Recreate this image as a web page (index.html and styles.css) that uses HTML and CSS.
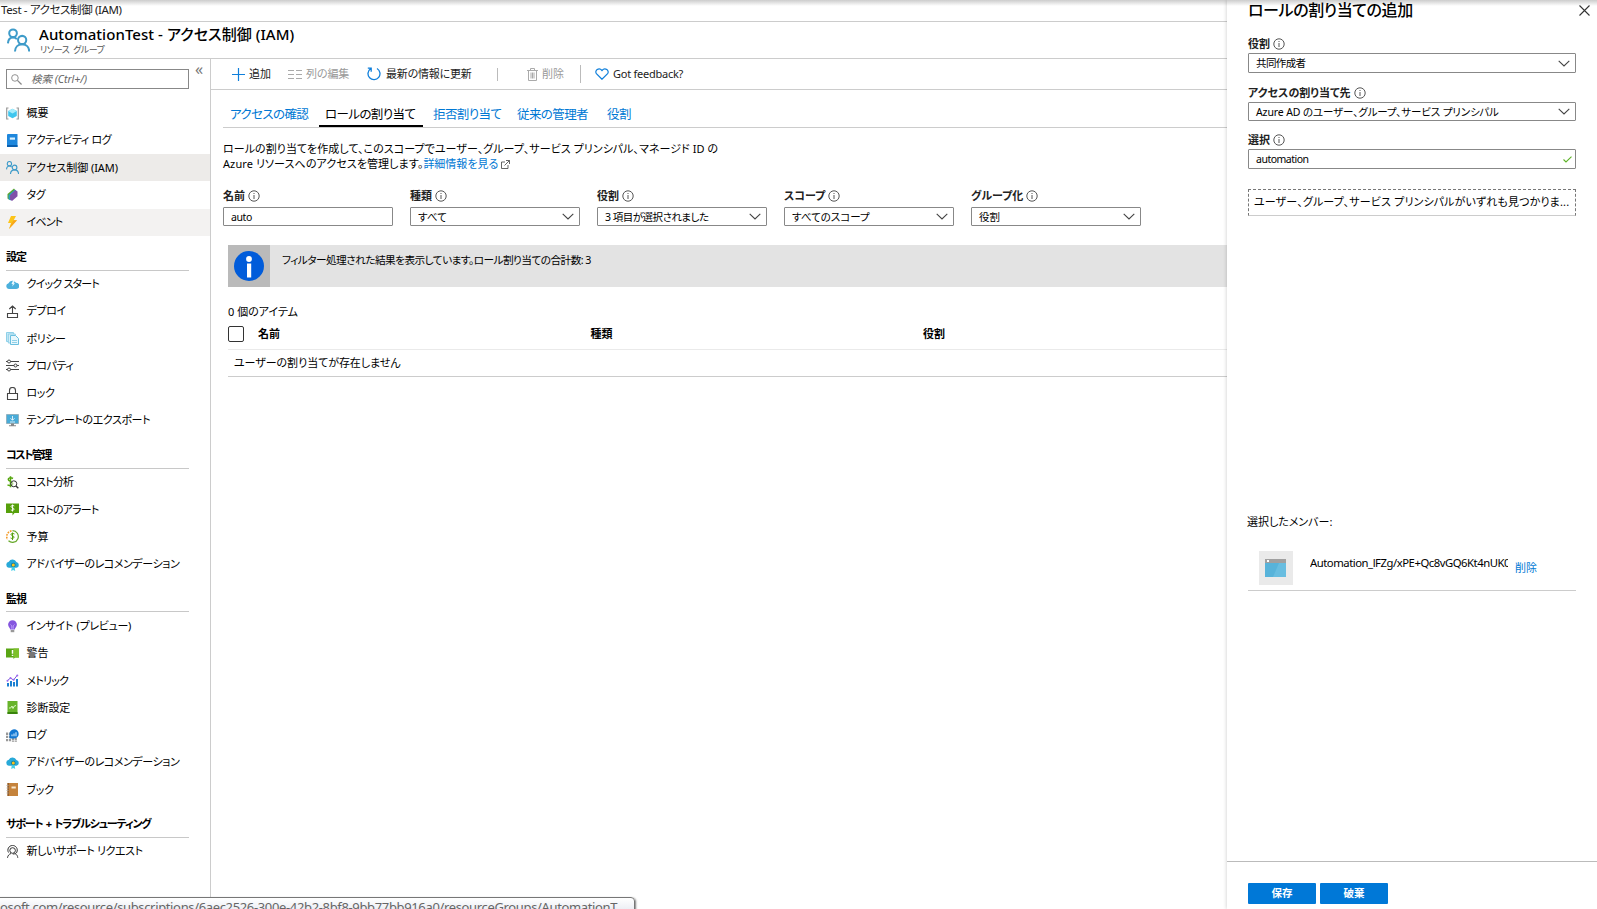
FILE: index.html
```html
<!DOCTYPE html>
<html lang="ja">
<head>
<meta charset="utf-8">
<title>AutomationTest - アクセス制御 (IAM)</title>
<link rel="stylesheet" href="styles.css">
</head>
<body>
<svg class="defs" aria-hidden="true">
  <symbol id="people" viewBox="0 0 24 24"><g fill="none" stroke="currentColor" stroke-width="2.1"><circle cx="6.3" cy="5" r="4"/><path d="M1 15.5C1.2 11.8 3.2 9.3 6.3 9.3c1.8 0 3.2.7 4 1.9"/><circle cx="15.8" cy="12" r="4.3"/><path d="M8.3 24c.2-4.6 3.3-7.6 7.5-7.6s7.200 3 7.400 7.600"/></g></symbol>
  <symbol id="search" viewBox="0 0 12 12"><g fill="none" stroke="#888"><circle cx="4.300" cy="4.300" r="3.600"/><path d="M7 7l4.500 4.500" stroke-width="1.400"/></g></symbol>
  <symbol id="info" viewBox="0 0 12 12"><circle cx="6" cy="6" r="5.200" fill="none" stroke="#555"/><path d="M6 5v4M6 3v1" stroke="#555"/></symbol>
  <symbol id="chev" viewBox="0 0 12 7"><path d="M.7.8L6 6 11.300.8" fill="none" stroke="#444" stroke-width="1.100"/></symbol>
  <symbol id="overview" viewBox="0 0 13 13"><path d="M2.500 1H.7v11h1.800M10.500 1h1.800v11h-1.800" fill="none" stroke="#999" stroke-width="1.200"/><path d="M6.500 1.800l4.300 2.300v4.800l-4.300 2.300-4.300-2.300V4.100z" fill="#3fc6ee"/><path d="M6.500 1.800l4.300 2.300-4.300 2.300-4.300-2.300z" fill="#a5ecfb"/></symbol>
  <symbol id="log" viewBox="0 0 13 13"><path d="M2 0h9.500v13H2a1 1 0 0 1-1-1V1a1 1 0 0 1 1-1z" fill="#1e87dc"/><path d="M1 11h10.500v2H1z" fill="#0a5fae"/><path d="M3.800 3.500H9v2.200H3.800z" fill="#d8f1ff"/></symbol>
  <symbol id="tag" viewBox="0 0 13 13"><path d="M1.500 6L8 .5l1.500 2L3.500 12 1.500 10.500z" fill="#5ba52e"/><path d="M2.500 7L9 1.500l1.500 2L4.500 12.500l-2-1.500z" fill="#2b9cc4"/><path d="M4 7.200L9.500 2l2 1.500v4.700L6 13l-2-1.500z" fill="#8150a8"/></symbol>
  <symbol id="bolt" viewBox="0 0 13 13"><path d="M5 0h5L7.700 4.300H11L3 13l2-6H2z" fill="#fcc419"/><path d="M7.700 4.300H11L3 13l2.300-5z" fill="#f9a51a"/></symbol>
  <symbol id="quick" viewBox="0 0 13 13"><path d="M2.800 11a2.900 2.900 0 0 1-.3-5.700A4.200 4.200 0 0 1 10 4.800a3.100 3.100 0 0 1 .3 6.200z" fill="#4bb0dc"/><path d="M7 2.500L5.500 6h1.300L6.200 8.500 9 5.200H7.700L9 2.500z" fill="#e9f9ff"/></symbol>
  <symbol id="deploy" viewBox="0 0 13 13"><path d="M1.500 8.500h10v4h-10zM6.500 8V1M3.300 4L6.500 1l3.200 3" fill="none" stroke="#444" stroke-width="1.100"/></symbol>
  <symbol id="policy" viewBox="0 0 13 13"><path d="M.5.500h7v9h-7z" fill="#c9eaf7" stroke="#8fd0e8"/><path d="M2.300 2h7v9h-7z" fill="#d4eff9" stroke="#8fd0e8"/><path d="M4.500 3.500h5l3 3v6h-8z" fill="#e8f7fc" stroke="#6bbfdf"/><path d="M6 8.500h5M6 10.500h5" stroke="#8fd0e8"/></symbol>
  <symbol id="props" viewBox="0 0 13 13"><g fill="#fff" stroke="#444"><path d="M0 2.500h13M0 6.500h13M0 10.500h13"/><circle cx="3" cy="2.500" r="1.500"/><circle cx="9.500" cy="6.500" r="1.500"/><circle cx="3" cy="10.500" r="1.500"/></g></symbol>
  <symbol id="lock" viewBox="0 0 13 13"><path d="M1.500 6.500h10v6h-10zM3.500 6.500v-3a3 3 0 0 1 6 0v3" fill="none" stroke="#444" stroke-width="1.100"/></symbol>
  <symbol id="export" viewBox="0 0 13 13"><path d="M.5.500h12v9H.5z" fill="#48abd8" stroke="#8ba8b5" stroke-width=".8"/><path d="M6.500 2v4M4.500 4.300l2 2 2-2M4 8h5" fill="none" stroke="#fff" stroke-width=".8"/><path d="M5 9.500h3v1.700h2v1H3v-1h2z" fill="#888"/></symbol>
  <symbol id="cost" viewBox="0 0 13 13"><path d="M7 2.500C4.500 1 2 2 2.300 3.700S7 5.500 6.800 7.800 3 10 1.500 8.700M4.500.2v11" fill="none" stroke="#56a60f" stroke-width="1.500"/><circle cx="7.800" cy="7.800" r="3" fill="#fff8" stroke="#333"/><path d="M10 10l2.300 2.300" stroke="#333" stroke-width="1.400"/></symbol>
  <symbol id="alertcost" viewBox="0 0 13 13"><path d="M0 .5h13V10H8.500L6.500 12.500V10H0z" fill="#56a00b"/><path d="M8.300 3C6.500 2 4.800 2.500 5 3.700s3.200 1 3 2.500-1.900 1.400-3.200.7M6.500 1.500v7" fill="none" stroke="#fff" stroke-width=".9"/></symbol>
  <symbol id="budget" viewBox="0 0 13 13"><path d="M6.500.7a5.800 5.800 0 1 1-4 10" fill="none" stroke="#68a92c" stroke-width="1.200"/><path d="M5.500.9A5.800 5.800 0 0 0 1.500 9.500" fill="none" stroke="#f49b28" stroke-width="1.600" stroke-dasharray="1.700 1"/><path d="M8.500 4C6.500 3 4.800 3.500 5 4.700s3.200 1 3 2.500-2 1.600-3.400.8M6.500 2.500v7.500" fill="none" stroke="#56a00b"/></symbol>
  <symbol id="advisor" viewBox="0 0 13 13"><path d="M2.800 9.800a3.100 3.100 0 0 1 0-6.100 4.200 4.200 0 0 1 7.600.4 2.900 2.900 0 0 1 .1 5.700z" fill="#28a9d8"/><path d="M6 8l-.8 5 2-1 2 1L8.500 8z" fill="#45cfe8"/><circle cx="7.300" cy="7" r="2.300" fill="#147e9b"/><circle cx="7.300" cy="7" r="1.500" fill="#ffc21a"/></symbol>
  <symbol id="bulb" viewBox="0 0 13 13"><path d="M6.500.2a4.400 4.400 0 0 1 4.400 4.400C10.900 7 9 8 8.800 9.500H4.200C4 8 2.100 7 2.100 4.600A4.400 4.400 0 0 1 6.500.2z" fill="#8556df"/><path d="M4.500 4.500l1.300 1.300v3M8.500 4.500L7.200 5.800v3" fill="none" stroke="#c7acff" stroke-width=".8"/><path d="M4.700 10h3.600v2.200H4.700z" fill="#999"/></symbol>
  <symbol id="warn" viewBox="0 0 13 13"><path d="M0 1.500h13v9H9L7.500 12v-1.500H0z" fill="#59a514"/><path d="M7.500 1.500H13v9H7.500z" fill="#7ec12c"/><path d="M6.500 3v3.700M6.500 7.700v1.400" stroke="#fff" stroke-width="1.500"/></symbol>
  <symbol id="metric" viewBox="0 0 13 13"><path d="M2 12.500V9M5 12.500V7M8 12.500V8M11 12.500V5" stroke="#1c80d2" stroke-width="2"/><path d="M1 7l3.500-3 3 2L11.500 1" fill="none" stroke="#8155dc"/><g fill="#9c69f0"><circle cx="1.500" cy="6.800" r="1"/><circle cx="4.500" cy="4" r="1"/><circle cx="7.700" cy="5.700" r="1"/><circle cx="11.300" cy="1.500" r="1"/></g></symbol>
  <symbol id="diag" viewBox="0 0 13 13"><path d="M1.500 0h10v13h-10z" fill="#67b32a"/><path d="M1.500 11h10v2h-10z" fill="#39830c"/><path d="M3 7h1.700L6 5l1 2.500L8.300 5 10 4.500" fill="none" stroke="#e5ffd0" stroke-width=".9"/></symbol>
  <symbol id="logs" viewBox="0 0 13 13"><path d="M1 3.500v9.500M4 3.500v9.500M7 9v4M9.800 9v4" stroke="#999" stroke-width="2.200" stroke-dasharray="2.400 .8"/><path d="M8 .2a4.700 4.700 0 1 1 0 9.400H3.500V5A4.700 4.700 0 0 1 8 .2z" fill="#1377d1"/><path d="M6 7.300V5.500M8 7.300V4.500M10 7.300v-4" stroke="#d5edff" stroke-width="1.100"/></symbol>
  <symbol id="book" viewBox="0 0 13 13"><path d="M1.500 0h10.500v13H1.500z" fill="#c5833c"/><path d="M1.500 0H3v13H1.500z" fill="#95602d"/><path d="M5.500 3.500h4.300v2H5.500z" fill="#fbe8cd"/><path d="M.5 2.500h2M.5 5h2M.5 7.500h2M.5 10h2" stroke="#aaa" stroke-width=".8"/></symbol>
  <symbol id="support" viewBox="0 0 13 13"><g fill="none" stroke="#333"><path d="M2.500 7.500a4.700 4.700 0 1 1 8.300-.3c-.5 1.300-2 1.800-4 1.800"/><circle cx="6.600" cy="5.500" r="2.800"/><path d="M1.500 12.800c.3-2.200 1.500-3.600 3.500-4.300M11.800 12.800c-.2-2-1-3.200-2.500-4"/></g></symbol>
</svg>
<div class="app">
  <div class="crumb"><span class="t-crumb">Test - アクセス制御 (IAM)</span></div>
  <header class="head">
    <svg class="head-icon"><use href="#people"/></svg>
    <div class="head-text"><h1>AutomationTest - アクセス制御 (IAM)</h1><p>リソース グループ</p></div>
  </header>
  <div class="body">
    <nav class="side">
      <div class="search-row"><div class="search"><svg><use href="#search"/></svg><span>検索 (Ctrl+/)</span></div><b class="collapse">«</b></div>
      <ul>
        <li><svg><use href="#overview"/></svg><span class="wide">概要</span></li>
        <li><svg><use href="#log"/></svg><span>アクティビティ ログ</span></li>
        <li class="sel"><svg class="blue"><use href="#people"/></svg><span class="wide">アクセス制御 (IAM)</span></li>
        <li><svg><use href="#tag"/></svg><span>タグ</span></li>
        <li class="hov"><svg><use href="#bolt"/></svg><span class="narrow">イベント</span></li>
      </ul>
      <h2>設定</h2>
      <ul>
        <li><svg><use href="#quick"/></svg><span class="narrow">クイック スタート</span></li>
        <li><svg><use href="#deploy"/></svg><span>デプロイ</span></li>
        <li><svg><use href="#policy"/></svg><span>ポリシー</span></li>
        <li><svg><use href="#props"/></svg><span>プロパティ</span></li>
        <li><svg><use href="#lock"/></svg><span>ロック</span></li>
        <li><svg><use href="#export"/></svg><span>テンプレートのエクスポート</span></li>
      </ul>
      <h2 class="tighter">コスト管理</h2>
      <ul>
        <li><svg><use href="#cost"/></svg><span class="narrow">コスト分析</span></li>
        <li><svg><use href="#alertcost"/></svg><span class="narrow">コストのアラート</span></li>
        <li><svg><use href="#budget"/></svg><span class="wide">予算</span></li>
        <li><svg><use href="#advisor"/></svg><span>アドバイザーのレコメンデーション</span></li>
      </ul>
      <h2>監視</h2>
      <ul>
        <li><svg><use href="#bulb"/></svg><span class="mid">インサイト (プレビュー)</span></li>
        <li><svg><use href="#warn"/></svg><span class="wide">警告</span></li>
        <li><svg><use href="#metric"/></svg><span class="narrow">メトリック</span></li>
        <li><svg><use href="#diag"/></svg><span class="wide">診断設定</span></li>
        <li><svg><use href="#logs"/></svg><span>ログ</span></li>
        <li><svg><use href="#advisor"/></svg><span>アドバイザーのレコメンデーション</span></li>
        <li><svg><use href="#book"/></svg><span>ブック</span></li>
      </ul>
      <h2 class="tight">サポート + トラブルシューティング</h2>
      <ul><li><svg><use href="#support"/></svg><span>新しいサポート リクエスト</span></li></ul>
    </nav>
    <main class="main">
      <div class="toolbar">
        <div class="cmd c-add"><svg width="13" height="13" viewBox="0 0 13 13"><path d="M6.500 0v13M0 6.500h13" stroke="#0f7fdb" stroke-width="1.200"/></svg><span>追加</span></div>
        <div class="cmd c-col off"><svg width="14" height="9" viewBox="0 0 14 9"><path d="M0 .5h6M8 .5h6M0 4.500h6M8 4.500h6M0 8.500h6M8 8.500h6" stroke="#aaa"/></svg><span>列の編集</span></div>
        <div class="cmd c-ref"><svg width="14" height="14" viewBox="0 0 14 14"><path d="M10 1.500a6 6 0 1 1-6.500.3M.8 1.200h3.400v3.500" fill="none" stroke="#0f7fdb" stroke-width="1.300"/></svg><span>最新の情報に更新</span></div>
        <i class="bar b1"></i>
        <div class="cmd c-del off"><svg width="11" height="13" viewBox="0 0 11 13"><path d="M0 2.500h11M3.500 2V.5h4V2M1.500 2.500v10h8v-10M4 4.500v6M5.500 4.500v6M7 4.500v6" fill="none" stroke="#aaa"/></svg><span>削除</span></div>
        <i class="bar b2"></i>
        <div class="cmd c-fb"><svg width="14" height="12" viewBox="0 0 14 12"><path d="M7 11.200L1.400 5.700C-.8 2.800 3.800-1.300 7 2.500c3.200-3.800 7.800.3 5.600 3.200z" fill="none" stroke="#0f7fdb" stroke-width="1.200"/></svg><span>Got feedback?</span></div>
      </div>
      <div class="tabs"><a class="tab1">アクセスの確認</a><a class="tab2 on">ロールの割り当て</a><a class="tab3">拒否割り当て</a><a class="tab4">従来の管理者</a><a class="tab5">役割</a></div>
      <p class="desc"><span class="d1">ロールの割り当てを作成して、このスコープでユーザー、グループ、サービス プリンシパル、マネージド ID の</span><br><span class="d2">Azure リソースへのアクセスを管理します。</span><a>詳細情報を見る</a><svg width="9" height="9" viewBox="0 0 9 9"><path d="M4 2H.5v6.500H7V5M5 .5h3.500V4M8.500.5L3.500 5.500" fill="none" stroke="#555" stroke-width=".9"/></svg></p>
      <div class="filters">
        <div class="field"><label>名前<svg><use href="#info"/></svg></label><div class="box"><span class="latin">auto</span></div></div>
        <div class="field"><label>種類<svg><use href="#info"/></svg></label><div class="box"><span>すべて</span><svg><use href="#chev"/></svg></div></div>
        <div class="field"><label>役割<svg><use href="#info"/></svg></label><div class="box"><span class="f3">3 項目が選択されました</span><svg><use href="#chev"/></svg></div></div>
        <div class="field"><label>スコープ<svg><use href="#info"/></svg></label><div class="box"><span>すべてのスコープ</span><svg><use href="#chev"/></svg></div></div>
        <div class="field"><label>グループ化<svg><use href="#info"/></svg></label><div class="box"><span>役割</span><svg><use href="#chev"/></svg></div></div>
      </div>
      <div class="notice"><div class="notice-icon"><svg width="30" height="30" viewBox="0 0 30 30"><circle cx="15" cy="15" r="15" fill="#015cda"/><circle cx="15" cy="8" r="2.900" fill="#fff"/><path d="M13 12.500h4.200v14H13z" fill="#fff"/></svg></div><span>フィルター処理された結果を表示しています。ロール割り当ての合計数: 3</span></div>
      <p class="count">0 個のアイテム</p>
      <div class="thead"><i class="check"></i><b>名前</b><b>種類</b><b>役割</b></div>
      <div class="trow">ユーザーの割り当てが存在しません</div>
    </main>
  </div>
  <aside class="panel">
    <div class="panel-head"><h3>ロールの割り当ての追加</h3><svg width="11" height="11" viewBox="0 0 11 11"><path d="M.5.500l10 10M10.500.500l-10 10" stroke="#333" stroke-width="1.100"/></svg></div>
    <div class="pfield p1"><label>役割<svg><use href="#info"/></svg></label><div class="box"><span class="s1">共同作成者</span><svg><use href="#chev"/></svg></div></div>
    <div class="pfield p2"><label><span>アクセスの割り当て先</span><svg><use href="#info"/></svg></label><div class="box"><span class="s2">Azure AD のユーザー、グループ、サービス プリンシパル</span><svg><use href="#chev"/></svg></div></div>
    <div class="pfield p3"><label>選択<svg><use href="#info"/></svg></label><div class="box"><span class="s3">automation</span><svg class="ok" viewBox="0 0 9 7"><path d="M.5 3.500L3 6 8.500.7" fill="none" stroke="#5eb327" stroke-width="1.100"/></svg></div></div>
    <div class="empty"><span>ユーザー、グループ、サービス プリンシパルがいずれも見つかりま...</span></div>
    <p class="members">選択したメンバー:</p>
    <div class="member"><div class="avatar"><svg width="21" height="18" viewBox="0 0 21 18"><path d="M0 0h21v18H0z" fill="#57b3da"/><path d="M14 4h7v14H8z" fill="#68bde0"/><path d="M0 0h21v4H0z" fill="#a0a0a0"/><path d="M2 1h2v2H2z" fill="#fff"/></svg></div><span class="mname">Automation_lFZg/xPE+Qc8vGQ6Kt4nUK0</span><a>削除</a></div>
    <footer><button>保存</button><button>破棄</button></footer>
  </aside>
  <div class="topshade"></div>
  <div class="status"><span>osoft.com/resource/subscriptions/6aec2526-300e-42b2-8bf8-9bb77bb916a0/resourceGroups/AutomationT...</span></div>
</div>
</body>
</html>
```
FILE: styles.css
```css
* { box-sizing: border-box; margin: 0; padding: 0; }
html, body { width: 1597px; height: 909px; overflow: hidden; background: #fff; }
body { font: 11px/14px "Noto Sans", "Noto Sans CJK JP", sans-serif; color: #000; font-feature-settings: "palt"; white-space: nowrap; }
.defs { position: absolute; width: 0; height: 0; }
svg { flex: none; display: block; }
ul { list-style: none; }
.app { position: relative; width: 1597px; height: 909px; overflow: hidden; }
.crumb { height: 22px; padding: 2px 0 0 1px; border-bottom: 1px solid #ccc; font-size: 11.5px; line-height: 16px; color: #222; letter-spacing: -.37px; }
.head { height: 37px; display: flex; padding: 5px 0 0 7px; border-bottom: 1px solid #ccc; }
.head-icon { width: 23px; height: 24px; margin-top: 1px; color: #3e9bc9; }
.head-text { padding-left: 9px; }
h1 { font-size: 15px; line-height: 16px; font-weight: 500; letter-spacing: .06px; margin-top: -1px; }
.head-text p { font-size: 9px; line-height: 11px; padding: 2px 0 0 1px; color: #555; letter-spacing: -.5px; word-spacing: 2px; }
.body { display: flex; height: 850px; }
.side { width: 211px; border-right: 1px solid #ccc; }
.search-row { display: flex; height: 40.6px; padding: 10px 0 0 6px; }
.search { width: 183px; height: 20px; border: 1px solid #888; display: flex; align-items: center; padding-left: 4px; font-style: italic; font-size: 10.5px; color: #666; }
.search svg { width: 11px; height: 11px; margin-right: 9px; }
.collapse { font: 16px/12px "Noto Sans"; color: #777; margin: -6px 0 0 6px; }
.side li { height: 27.25px; display: flex; align-items: center; padding-left: 6px; letter-spacing: -.42px; }
.side li svg { width: 13px; height: 13px; margin-right: 7.5px; }
.side li .wide { letter-spacing: -.05px; }
.side li .mid { letter-spacing: -.3px; word-spacing: 1px; }
.side li .narrow { letter-spacing: -.8px; }
.blue { color: #3e9bc9; }
.sel { background: #edebe9; }
.hov { background: #f3f2f1; }
h2 { width: 183px; height: 34.7px; margin-left: 6px; padding-top: 14px; border-bottom: 1px solid #c8c8c8; font-size: 11px; line-height: 14px; font-weight: 700; letter-spacing: -.9px; }
h2.tight { letter-spacing: -1.15px; word-spacing: 1.5px; }
h2.tighter { letter-spacing: -1.5px; }
.main { flex: 1; min-width: 0; }
.toolbar { height: 31px; border-bottom: 1px solid #ccc; display: flex; align-items: center; padding-left: 21px; color: #222; }
.cmd { display: flex; align-items: center; gap: 4px; letter-spacing: -.1px; }
.c-add { width: 56px; }
.c-col { width: 79px; gap: 4px; }
.c-ref { width: 130px; gap: 5px; letter-spacing: -.2px; }
.c-del { width: 53px; }
.c-fb { letter-spacing: -.25px; }
.off { color: #999; }
.bar { width: 1px; background: #bbb; height: 13px; }
.b1 { margin-right: 29px; }
.b2 { height: 18px; margin-right: 14px; }
.tabs { height: 38px; margin-left: 12px; border-bottom: 1px solid #ccc; display: flex; align-items: flex-end; padding-left: 7px; font-size: 12.5px; line-height: 16px; letter-spacing: -.6px; color: #0078d4; }
.tabs a { height: 20.500px; }
.tab1 { width: 89px; }
.tab2 { width: 104px; padding-left: 6px; }
.tab3 { width: 84px; margin-left: 10px; }
.tab4 { width: 90px; }
.on { border-bottom: 2px solid #000; color: #000; }
.desc { padding: 13px 0 0 12px; line-height: 15px; height: 60px; font-size: 11px; }
.d1 { letter-spacing: .06px; }
.d2 { letter-spacing: .09px; }
.desc a, .member a { color: #0078d4; }
.desc svg { display: inline-block; margin-left: 3px; vertical-align: -1px; }
.filters { display: flex; gap: 17px; padding-left: 12px; height: 57px; }
.field { width: 170px; }
label { display: flex; align-items: center; gap: 3px; height: 14px; margin-bottom: 5px; font-weight: 700; color: #222; }
.field label { margin: 1px 0 4px; }
label svg { width: 12px; height: 12px; }
.box { display: flex; align-items: center; justify-content: space-between; height: 19px; border: 1px solid #888; border-radius: 1px; padding: 0 5px 0 7px; font-size: 10.5px; }
.box .latin { letter-spacing: -.4px; }
.f3 { letter-spacing: -.5px; }
.box svg { width: 12px; height: 7px; }
.notice { margin-left: 17px; height: 42px; background: #e3e3e3; display: flex; line-height: 14px; }
.notice-icon { width: 42px; background: #bababa; padding: 6px; margin-right: 12px; }
.notice > span { padding-top: 8px; font-size: 10.7px; letter-spacing: -.57px; }
.count { padding: 18px 0 0 17px; height: 39px; }
.thead { margin-left: 17px; height: 24px; border-bottom: 1px solid #eaeaea; display: flex; }
.check { width: 16px; height: 16px; border: 1px solid #333; border-radius: 2px; margin-right: 14px; }
.thead b { width: 332.500px; line-height: 16px; }
.trow { margin-left: 17px; height: 27px; border-bottom: 1px solid #ccc; padding: 6px 0 0 6px; letter-spacing: -.05px; }
.panel { position: absolute; left: 1227px; top: 0; width: 370px; height: 909px; background: #fff; box-shadow: 0 0 4px rgba(0,0,0,.22); padding-left: 21px; display: flex; flex-direction: column; }
.panel-head { display: flex; justify-content: space-between; height: 37px; padding-right: 7px; }
h3 { font-size: 16px; line-height: 20px; font-weight: 500; letter-spacing: -.4px; }
.panel-head svg { margin-top: 5px; }
.pfield { width: 328px; height: 49px; }
.pfield .box { height: 20px; }
.pfield label { margin-bottom: 2px; }
.pfield.p2 { height: 47px; }
.pfield.p2 .box { height: 19px; }
.pfield.p3 { height: 56px; }
.s1 { letter-spacing: -.6px; }
.s2 { letter-spacing: -.12px; }
.s3 { letter-spacing: -.5px; }
.box .ok { width: 9px; height: 7px; margin-right: -2px; }
.empty { width: 328px; height: 27px; border: 1px dashed #777; border-bottom: 1px solid #ccc; padding: 5px 0 0 5px; letter-spacing: .15px; }
.members { margin-top: 299px; height: 36px; margin-left: -1px; }
.member { width: 328px; height: 40px; border-bottom: 1px solid #ccc; padding-left: 11px; display: flex; }
.avatar { width: 34px; height: 34px; background: #eaeaea; padding: 8px 6px; }
.mname { width: 198px; overflow: hidden; margin: 5px 7px 0 17px; font-size: 11.3px; letter-spacing: -.47px; }
.member a { padding-top: 10px; }
footer { margin: auto 0 0 -21px; height: 48px; border-top: 1px solid #bbb; padding: 21px 0 0 21px; display: flex; gap: 4px; }
button { width: 68px; height: 21px; border: 0; border-radius: 1px; background: #0078d7; color: #fff; font: 700 10.5px/21px "Noto Sans", "Noto Sans CJK JP", sans-serif; }
.topshade { position: absolute; left: 0; top: 0; width: 1597px; height: 6px; background: linear-gradient(rgba(0,0,0,.2), rgba(0,0,0,0)); }
.status { position: absolute; left: -1px; top: 897px; width: 636px; height: 20px; border: 1px solid #777; border-radius: 0 4px 0 0; background: linear-gradient(#fff, #e8ebf2 14px); box-shadow: 1px 1px 2px rgba(0,0,0,.5); font-size: 13px; line-height: 18px; color: #666; letter-spacing: -.35px; overflow: hidden; }
```
